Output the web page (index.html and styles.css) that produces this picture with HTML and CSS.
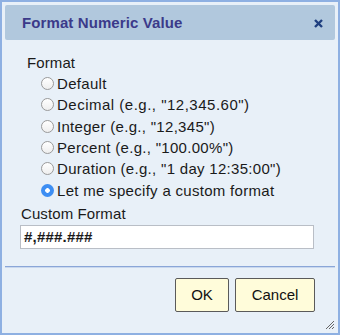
FILE: index.html
```html
<!DOCTYPE html>
<html>
<head>
<meta charset="utf-8">
<link rel="stylesheet" href="styles.css">
</head>
<body>
<div class="dialog">
  <div class="titlebar">
    <span class="title">Format Numeric Value</span>
    <span class="close" aria-label="close">
      <svg width="9" height="9" viewBox="0 0 9 9"><path d="M1 1L8 8M8 1L1 8" stroke="#1f3f7f" stroke-width="2.4" stroke-linecap="butt"/></svg>
    </span>
  </div>
  <div class="body">
    <div class="label format-label">Format</div>
    <div class="options">
      <label class="opt"><span class="radio"></span>Default</label>
      <label class="opt"><span class="radio"></span><span class="num">Decimal (e.g., "12,345.60")</span></label>
      <label class="opt"><span class="radio"></span>Integer (e.g., "12,345")</label>
      <label class="opt"><span class="radio"></span>Percent (e.g., "100.00%")</label>
      <label class="opt"><span class="radio"></span>Duration (e.g., "1 day 12:35:00")</label>
      <label class="opt"><span class="radio checked"></span>Let me specify a custom format</label>
    </div>
    <div class="label custom-label">Custom Format</div>
    <div class="input">#,###.###</div>
  </div>
  <div class="sep"></div>
  <div class="buttons">
    <button class="btn ok">OK</button>
    <button class="btn cancel">Cancel</button>
  </div>
  <svg class="grip" width="11" height="11" viewBox="0 0 11 11"><path d="M10 2L2 10M10 5L5 10M10 8L8 10" stroke="#666" stroke-width="1"/></svg>
</div>
</body>
</html>
```
FILE: styles.css
```css
html, body {
  margin: 0;
  padding: 0;
  background: #e8f0f8;
}
body {
  font-family: "Liberation Sans", Arial, sans-serif;
  color: #1a1a1a;
}
.dialog {
  position: relative;
  box-sizing: border-box;
  width: 340px;
  height: 335px;
  border: 2px solid #8eb0e2;
  background: #e8f0f8;
  padding: 3px;
  display: flex;
  flex-direction: column;
}
.titlebar {
  height: 35px;
  background: #b1c8dd;
  border-radius: 2px;
  display: flex;
  align-items: center;
  justify-content: space-between;
  padding: 0 12px 0 17px;
}
.title {
  font-weight: bold;
  font-size: 15px;
  color: #3b3a8a;
  letter-spacing: 0.1px;
}
.close {
  display: flex;
  align-items: center;
  margin-top: 1px;
}
.body {
  padding: 12px 21px 0 15px;
  font-size: 15px;
  letter-spacing: 0.3px;
}
.label {
  line-height: 21px;
}
.format-label {
  padding-left: 7px;
  letter-spacing: 0.1px;
}
.options {
  padding-left: 21px;
  display: flex;
  flex-direction: column;
}
.opt {
  display: flex;
  align-items: center;
  height: 21.3px;
  white-space: nowrap;
}
.num {
  letter-spacing: 0.5px;
}
.radio {
  box-sizing: border-box;
  width: 13px;
  height: 13px;
  border-radius: 50%;
  border: 1px solid #9a9a9a;
  background: linear-gradient(#ffffff, #eeeeee);
  margin-right: 3px;
  flex: none;
}
.radio.checked {
  border: none;
  background: radial-gradient(circle, #ffffff 0 2px, #3d8ef3 2.6px);
}
.custom-label {
  margin-top: 2px;
  padding-left: 1px;
  letter-spacing: 0.1px;
}
.input {
  box-sizing: border-box;
  margin-top: 1px;
  height: 24px;
  width: 294px;
  background: #ffffff;
  border: 1px solid #b9bec6;
  font-size: 15px;
  font-weight: bold;
  line-height: 22px;
  padding-left: 3px;
  letter-spacing: 0.2px;
}
.sep {
  margin-top: 17px;
  height: 1px;
  background: #8aa6d8;
  border-bottom: 1px solid #c9d8ee;
}
.buttons {
  display: flex;
  justify-content: flex-end;
  gap: 6px;
  padding: 10px 20px 0 0;
}
.btn {
  box-sizing: border-box;
  height: 34px;
  background: #fffcda;
  border: 1px solid #5a5a5a;
  border-radius: 2px;
  font-family: "Liberation Sans", Arial, sans-serif;
  font-size: 15px;
  color: #111;
  padding: 0;
}
.ok { width: 54px; }
.cancel { width: 80px; }
.grip {
  position: absolute;
  right: 3px;
  bottom: 3px;
}
```
